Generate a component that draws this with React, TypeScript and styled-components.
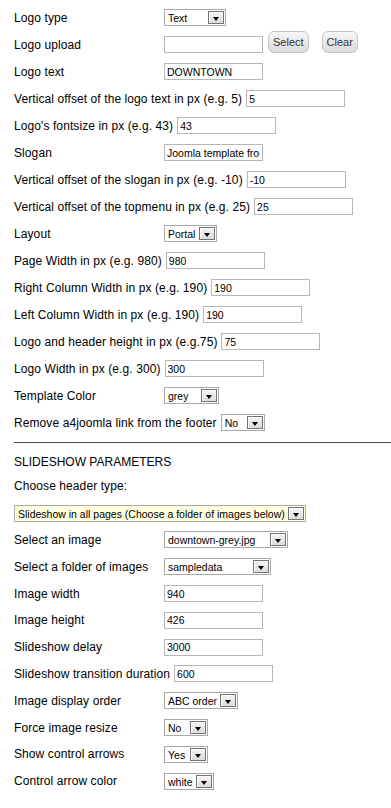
import React from "react";
import styled, { createGlobalStyle } from "styled-components";

const GlobalStyle = createGlobalStyle`
  html, body {
    margin: 0;
    padding: 0;
    background: #fff;
  }
  body {
    font-family: "Liberation Sans", Arial, sans-serif;
    color: #000;
  }
`;

const Page = styled.div`
  padding: 4px 0 0 14px;
  width: 391px;
  box-sizing: border-box;
`;

const Row = styled.div<{ $tight?: boolean }>`
  display: flex;
  align-items: center;
  height: ${({ $tight }) => ($tight ? 26.8 : 27)}px;
`;

// labels are a touch wider in the original (hinted Arial), hence the spacing
const Label = styled.span`
  min-width: 146px;
  margin-right: 4px;
  font-size: 12px;
  letter-spacing: 0.09px;
  white-space: nowrap;
`;

const TextInput = styled.input<{ $w?: number }>`
  box-sizing: border-box;
  width: ${({ $w }) => $w ?? 99}px;
  height: 17px;
  margin: 0;
  padding: 0 2px;
  border: 1px solid #b7b7b7;
  background: #fff;
  font-family: "Liberation Sans", Arial, sans-serif;
  font-size: 10.5px;
  color: #000;
  outline: none;
`;

const PlainButton = styled.button<{ $gap?: number }>`
  box-sizing: border-box;
  height: 22px;
  margin: 0 0 5px ${({ $gap }) => $gap ?? 0}px;
  padding: 0 4px;
  border: 1px solid #c4c4c4;
  border-radius: 6px;
  background: linear-gradient(#f8f8f8, #e6e6e6 55%, #dcdcdc);
  font-family: "Liberation Sans", Arial, sans-serif;
  font-size: 11px;
  color: #333;
`;

const SelectBox = styled.div<{ $w: number; $bg?: string }>`
  display: flex;
  align-items: center;
  box-sizing: border-box;
  width: ${({ $w }) => $w}px;
  height: 17px;
  padding-left: 3px;
  border: 1px solid #a9a9a9;
  background: ${({ $bg }) => $bg ?? "#fff"};
  font-size: 10.5px;
  color: #000;
  flex-shrink: 0;
`;

const SelectValue = styled.span`
  flex: 1;
  overflow: hidden;
  white-space: nowrap;
  padding-top: 1px;
`;

const DropButton = styled.span`
  display: flex;
  align-items: center;
  justify-content: center;
  box-sizing: border-box;
  width: 16px;
  height: 13px;
  margin-right: 1px;
  padding-top: 3px;
  border: 1px solid #737373;
  background: linear-gradient(#f4f4f4, #dcdcdc);
  box-shadow: inset 1px 1px 0 #fff;

  &::after {
    content: "";
    border-left: 3.5px solid transparent;
    border-right: 3.5px solid transparent;
    border-top: 4px solid #000;
  }
`;

const Rule = styled.div`
  height: 1px;
  margin-top: 6px;
  background: #4d4d4d;
`;

const SectionTitle = styled.div`
  display: flex;
  align-items: center;
  height: 23px;
  margin-top: 7px;
  font-size: 12px;
`;

type SelectProps = { value: string; width: number; bg?: string };

const FakeSelect = ({ value, width, bg }: SelectProps) => (
  <SelectBox $w={width} $bg={bg}>
    <SelectValue>{value}</SelectValue>
    <DropButton />
  </SelectBox>
);

type Field =
  | { label: string; kind: "input"; value: string; w?: number }
  | { label: string; kind: "select"; value: string; w: number };

const topFields: Field[] = [
  { label: "Logo text", kind: "input", value: "DOWNTOWN" },
  { label: "Vertical offset of the logo text in px (e.g. 5)", kind: "input", value: "5" },
  { label: "Logo's fontsize in px (e.g. 43)", kind: "input", value: "43" },
  { label: "Slogan", kind: "input", value: "Joomla template from a4joomla.com" },
  { label: "Vertical offset of the slogan in px (e.g. -10)", kind: "input", value: "-10" },
  { label: "Vertical offset of the topmenu in px (e.g. 25)", kind: "input", value: "25" },
  { label: "Layout", kind: "select", value: "Portal", w: 53 },
  { label: "Page Width in px (e.g. 980)", kind: "input", value: "980" },
  { label: "Right Column Width in px (e.g. 190)", kind: "input", value: "190" },
  { label: "Left Column Width in px (e.g. 190)", kind: "input", value: "190" },
  { label: "Logo and header height in px (e.g.75)", kind: "input", value: "75" },
  { label: "Logo Width in px (e.g. 300)", kind: "input", value: "300" },
  { label: "Template Color", kind: "select", value: "grey", w: 55 },
  { label: "Remove a4joomla link from the footer", kind: "select", value: "No", w: 44 },
];

const slideFields: Field[] = [
  { label: "Select an image", kind: "select", value: "downtown-grey.jpg", w: 124 },
  { label: "Select a folder of images", kind: "select", value: "sampledata", w: 107 },
  { label: "Image width", kind: "input", value: "940" },
  { label: "Image height", kind: "input", value: "426" },
  { label: "Slideshow delay", kind: "input", value: "3000" },
  { label: "Slideshow transition duration", kind: "input", value: "600" },
  { label: "Image display order", kind: "select", value: "ABC order", w: 74 },
  { label: "Force image resize", kind: "select", value: "No", w: 44 },
  { label: "Show control arrows", kind: "select", value: "Yes", w: 44 },
  { label: "Control arrow color", kind: "select", value: "white", w: 50 },
];

const FieldRow = ({ field, tight }: { field: Field; tight?: boolean }) => (
  <Row $tight={tight}>
    <Label>{field.label}</Label>
    {field.kind === "input" ? (
      <TextInput $w={field.w} defaultValue={field.value} />
    ) : (
      <FakeSelect value={field.value} width={field.w} />
    )}
  </Row>
);

export default function App() {
  return (
    <>
      <GlobalStyle />
      <Page>
        <Row>
          <Label>Logo type</Label>
          <FakeSelect value="Text" width={62} />
        </Row>
        <Row>
          <Label>Logo upload</Label>
          <TextInput defaultValue="" />
          <PlainButton $gap={5}>Select</PlainButton>
          <PlainButton $gap={13}>Clear</PlainButton>
        </Row>
        {topFields.map((f) => (
          <FieldRow key={f.label} field={f} />
        ))}

        <Rule />
        <SectionTitle>SLIDESHOW PARAMETERS</SectionTitle>
        <Row $tight>
          <Label>Choose header type:</Label>
        </Row>
        <Row $tight>
          <FakeSelect
            value="Slideshow in all pages (Choose a folder of images below)"
            width={292}
            bg="#ffffdf"
          />
        </Row>
        {slideFields.map((f) => (
          <FieldRow key={f.label} field={f} tight />
        ))}
      </Page>
    </>
  );
}
